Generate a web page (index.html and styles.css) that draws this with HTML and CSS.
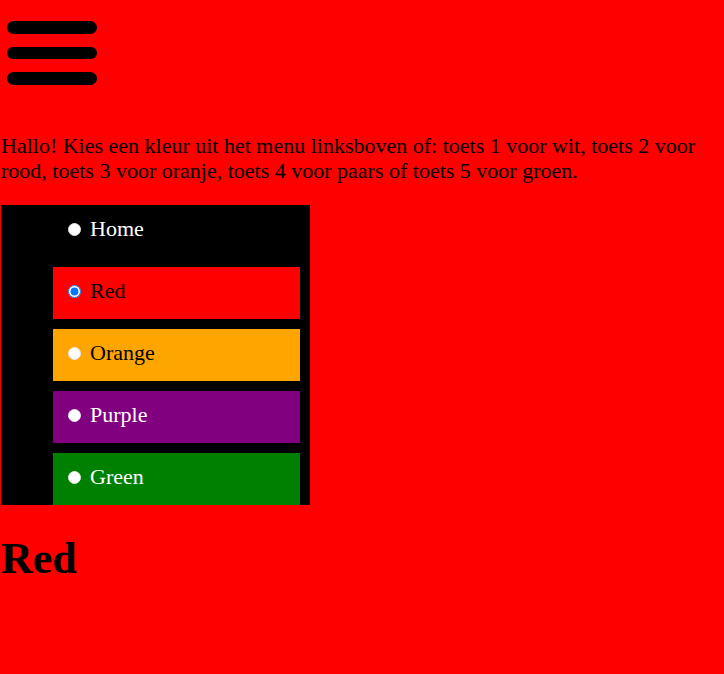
FILE: index.html
```html
<!DOCTYPE html>
<html lang="nl">
<head>
<meta charset="utf-8">
<title>Kleuren</title>
<link rel="stylesheet" href="styles.css">
</head>
<body>
<div class="header">
  <div class="burger">
    <span class="bar"></span>
    <span class="bar"></span>
    <span class="bar"></span>
  </div>
</div>
<p class="intro">Hallo! Kies een kleur uit het menu linksboven of: toets 1 voor wit, toets 2 voor rood, toets 3 voor oranje, toets 4 voor paars of toets 5 voor groen.</p>
<ul class="menu">
  <li class="item item-home"><label><input type="radio" name="kleur">Home</label></li>
  <li class="item item-red"><label><input type="radio" name="kleur" checked>Red</label></li>
  <li class="item item-orange"><label><input type="radio" name="kleur">Orange</label></li>
  <li class="item item-purple"><label><input type="radio" name="kleur">Purple</label></li>
  <li class="item item-green"><label><input type="radio" name="kleur">Green</label></li>
</ul>
<h1 class="title">Red</h1>
</body>
</html>
```
FILE: styles.css
```css
html, body {
  margin: 0;
  padding: 0;
}
body {
  background: #ff0000;
  font-family: "Liberation Serif", "Times New Roman", serif;
  font-size: 22px;
  color: #000;
  padding-left: 1px;
}
.header {
  padding: 21px 0 0 6px;
  height: 111px;
  box-sizing: border-box;
}
.burger {
  display: flex;
  flex-direction: column;
  gap: 13px;
  width: 90px;
}
.bar {
  display: block;
  height: 12.6px;
  background: #000;
  border-radius: 7px;
}
.intro {
  margin: 22px 0;
  line-height: 25px;
}
.menu {
  list-style: none;
  margin: 22px 0 0 0;
  padding: 0 10px 0 52px;
  width: 247px;
  background: #000;
  display: flex;
  flex-direction: column;
  gap: 10px;
}
.item {
  height: 52px;
  display: flex;
  align-items: center;
}
.item label {
  display: flex;
  align-items: center;
  padding-left: 10px;
  margin-top: -4px;
}
.item input {
  margin: 0 9px 0 5px;
  width: 13px;
  height: 13px;
}
.item input:not(:checked) {
  appearance: none;
  -webkit-appearance: none;
  border-radius: 50%;
  background: #fff;
  border: 1px solid #e6e6e6;
  box-sizing: border-box;
}
.item-home { background: #000; color: #fff; }
.item-red { background: #ff0000; color: #000; }
.item-orange { background: #ffa500; color: #000; }
.item-purple { background: #800080; color: #fff; }
.item-green { background: #008000; color: #fff; }
.title {
  font-size: 44px;
  margin: 29px 0;
  line-height: 50px;
}
```
